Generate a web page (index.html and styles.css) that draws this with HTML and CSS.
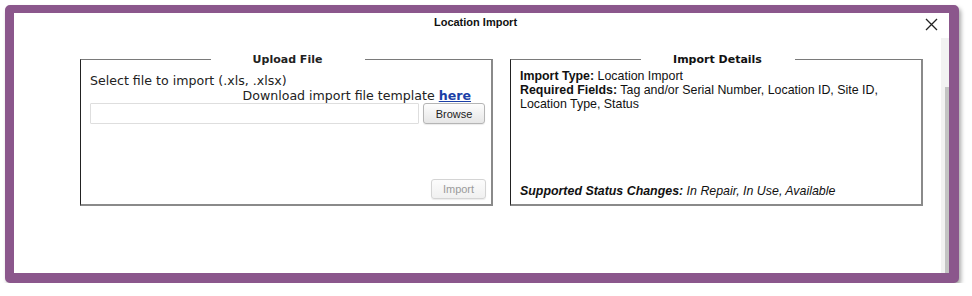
FILE: index.html
```html
<!DOCTYPE html>
<html>
<head>
<meta charset="utf-8">
<link rel="stylesheet" href="styles.css">
</head>
<body>
<div class="frame">
  <div class="header">
    <span></span>
    <div class="title">Location Import</div>
    <button class="close" aria-label="Close">
      <svg width="13" height="13" viewBox="0 0 13 13"><path d="M1 1L12 12M12 1L1 12" stroke="#222" stroke-width="1.3" fill="none"/></svg>
    </button>
  </div>
  <div class="body">
    <div class="content">
      <fieldset class="box upload">
        <legend>Upload File</legend>
        <div class="select-line">Select file to import (.xls, .xlsx)</div>
        <div class="download-line">Download import file template <a href="#">here</a></div>
        <div class="file-row">
          <div class="file-input"></div>
          <button class="btn">Browse</button>
        </div>
        <div class="actions">
          <button class="btn disabled">Import</button>
        </div>
      </fieldset>
      <fieldset class="box details">
        <legend>Import Details</legend>
        <div class="info"><b>Import Type:</b> Location Import</div>
        <div class="info"><b>Required Fields:</b> Tag and/or Serial Number, Location ID, Site ID,<br>Location Type, Status</div>
        <div class="info status"><b>Supported Status Changes</b><b class="up">:</b> In Repair, In Use, Available</div>
      </fieldset>
    </div>
    <div class="scrollbar"><div class="thumb"></div></div>
  </div>
</div>
</body>
</html>
```
FILE: styles.css
```css
html, body {
  margin: 0;
  padding: 0;
  background: #fff;
}
body {
  font-family: "Liberation Sans", Arial, sans-serif;
  color: #111;
}
.frame {
  margin: 5px 13px 0 5px;
  height: 278px;
  box-sizing: border-box;
  border-style: solid;
  border-color: #8b578c;
  border-width: 8px 10px 10px 9px;
  border-radius: 5px;
  background: #fff;
  box-shadow: 2px 3px 4px rgba(0, 0, 0, 0.35);
  display: flex;
  flex-direction: column;
}
.header {
  height: 24px;
  display: grid;
  grid-template-columns: 1fr auto 1fr;
  align-items: center;
  padding-right: 12px;
}
.title {
  font-weight: bold;
  font-size: 11px;
  line-height: 14px;
  margin-top: -7px;
}
.close {
  justify-self: end;
  margin-right: -1px;
  margin-top: -1px;
  padding: 0;
  border: 0;
  background: none;
  width: 13px;
  height: 13px;
  display: flex;
}
.body {
  flex: 1;
  display: flex;
  min-height: 0;
}
.content {
  flex: 1;
  display: flex;
  gap: 17px;
  padding: 15px 0 0 66px;
  align-items: flex-start;
}
.box {
  margin: 0;
  width: 413px;
  height: 154px;
  box-sizing: border-box;
  padding: 0 6px 0 9px;
  border-style: solid;
  border-width: 1px 2px 2px 1px;
  border-color: #7a7a7a #8a8a8a #8a8a8a #222;
  display: flex;
  flex-direction: column;
  min-width: 0;
}
.box legend {
  margin: 0 auto;
  width: 150px;
  padding: 0 2px;
  text-align: center;
  font-family: "DejaVu Sans", Verdana, sans-serif;
  font-weight: bold;
  font-size: 11px;
  line-height: 15px;
}
.upload {
  font-family: "DejaVu Sans", Verdana, sans-serif;
  font-size: 12.6px;
  color: #222;
}
.select-line {
  margin-top: 6px;
  line-height: 15px;
}
.download-line {
  line-height: 15px;
  text-align: right;
  padding-right: 14px;
}
.download-line a {
  color: #1b3fa6;
  font-weight: bold;
  text-decoration: underline;
}
.file-row {
  display: flex;
  gap: 4px;
  height: 21px;
}
.file-input {
  width: 329px;
  box-sizing: border-box;
  border: 1px solid #dedede;
  border-radius: 1px;
}
.btn {
  font-family: "Liberation Sans", Arial, sans-serif;
  font-size: 11px;
  color: #222;
  width: 62px;
  height: 21px;
  box-sizing: border-box;
  padding: 0;
  border: 1px solid #b5b5b5;
  border-radius: 3px;
  background: linear-gradient(#fdfdfd, #e6e6e6);
  box-shadow: 0 1px 1px rgba(0, 0, 0, 0.08);
}
.btn.disabled {
  color: #9a9a9a;
  border-color: #d4d4d4;
  background: linear-gradient(#fcfcfc, #f0f0f0);
  width: 55px;
  height: 20px;
}
.actions {
  margin-top: auto;
  margin-bottom: 5px;
  margin-right: -1px;
  display: flex;
  justify-content: flex-end;
}
.details {
  font-size: 12.4px;
  color: #111;
}
.info {
  line-height: 14px;
}
.details .info:first-of-type {
  margin-top: 2px;
}
.status {
  margin-top: auto;
  margin-bottom: 6px;
  font-style: italic;
}
.scrollbar {
  width: 8px;
  background: #f2f2f2;
  display: flex;
  flex-direction: column;
  align-items: flex-end;
  margin-top: 1px;
}
.thumb {
  width: 4px;
  margin-top: 49px;
  flex: 1;
  background: #c3c3c3;
}
```
